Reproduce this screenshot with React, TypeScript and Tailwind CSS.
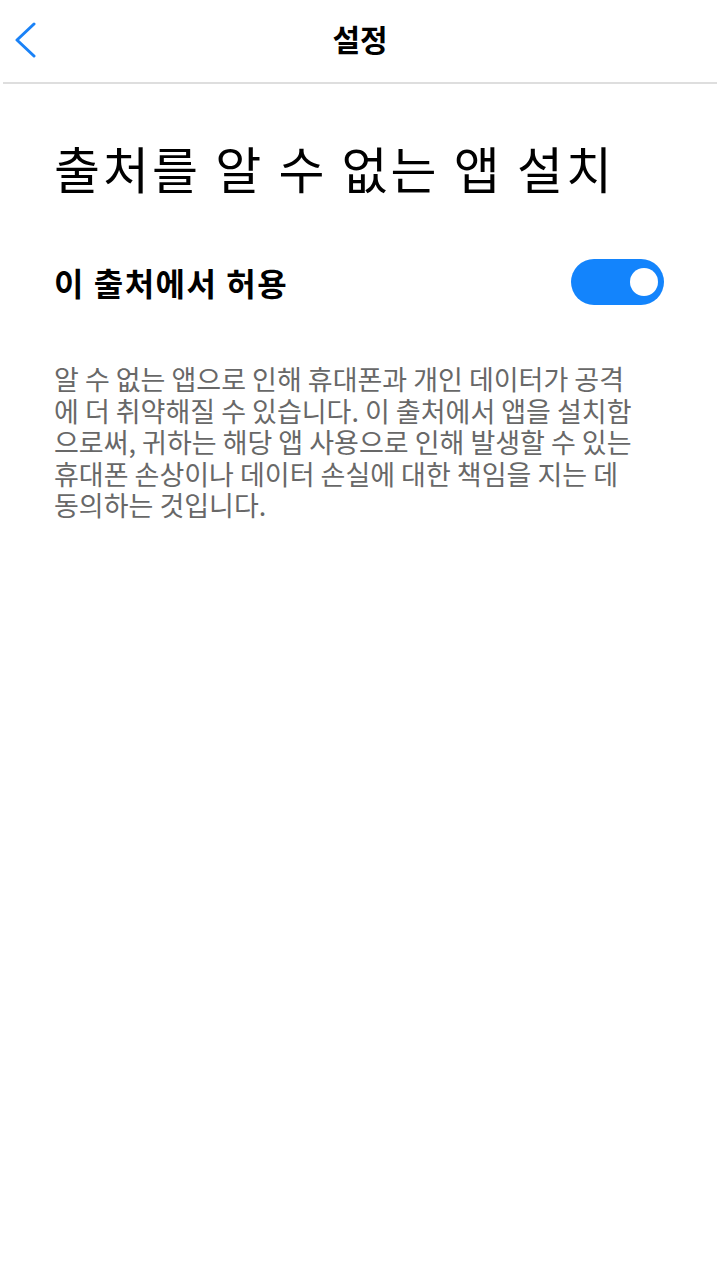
const font = { fontFamily: '"Noto Sans CJK KR", "Noto Sans", sans-serif' }

function BackChevron() {
  return (
    <svg width="24" height="36" viewBox="0 0 24 36" fill="none">
      <path d="M20 2 L3 18 L20 34" stroke="#1a82f7" strokeWidth="3" strokeLinecap="round" strokeLinejoin="round" />
    </svg>
  )
}

export default function App() {
  return (
    <div className="min-h-[1280px] bg-white text-black" style={font}>
      <header className="mx-[3px] flex h-[84px] items-center border-b-2 border-[#dedede] pb-[6px]">
        <div className="flex w-[60px] items-center pt-[4px] pl-[11px]">
          <BackChevron />
        </div>
        <h1 className="flex-1 text-center text-[30px] font-bold">설정</h1>
        <div className="w-[60px]" />
      </header>

      <main className="px-[54px]">
        <h2 className="mt-[47px] text-[50px] leading-[72px] font-normal tracking-[3px]">출처를 알 수 없는 앱 설치</h2>

        <div className="mt-[55px] flex items-center justify-between pr-[2px]">
          <span className="text-[32px] font-semibold tracking-[1.5px]">이 출처에서 허용</span>
          <button className="flex h-[46px] w-[93px] items-center justify-end rounded-full bg-[#1384fc] pr-[6px]">
            <span className="h-[28px] w-[28px] rounded-full bg-white" />
          </button>
        </div>

        <p className="mt-[57px] text-[27px] leading-[31.5px] text-[#686868]">
          알 수 없는 앱으로 인해 휴대폰과 개인 데이터가 공격
          <br />
          에 더 취약해질 수 있습니다. 이 출처에서 앱을 설치함
          <br />
          으로써, 귀하는 해당 앱 사용으로 인해 발생할 수 있는
          <br />
          휴대폰 손상이나 데이터 손실에 대한 책임을 지는 데
          <br />
          동의하는 것입니다.
        </p>
      </main>
    </div>
  )
}
